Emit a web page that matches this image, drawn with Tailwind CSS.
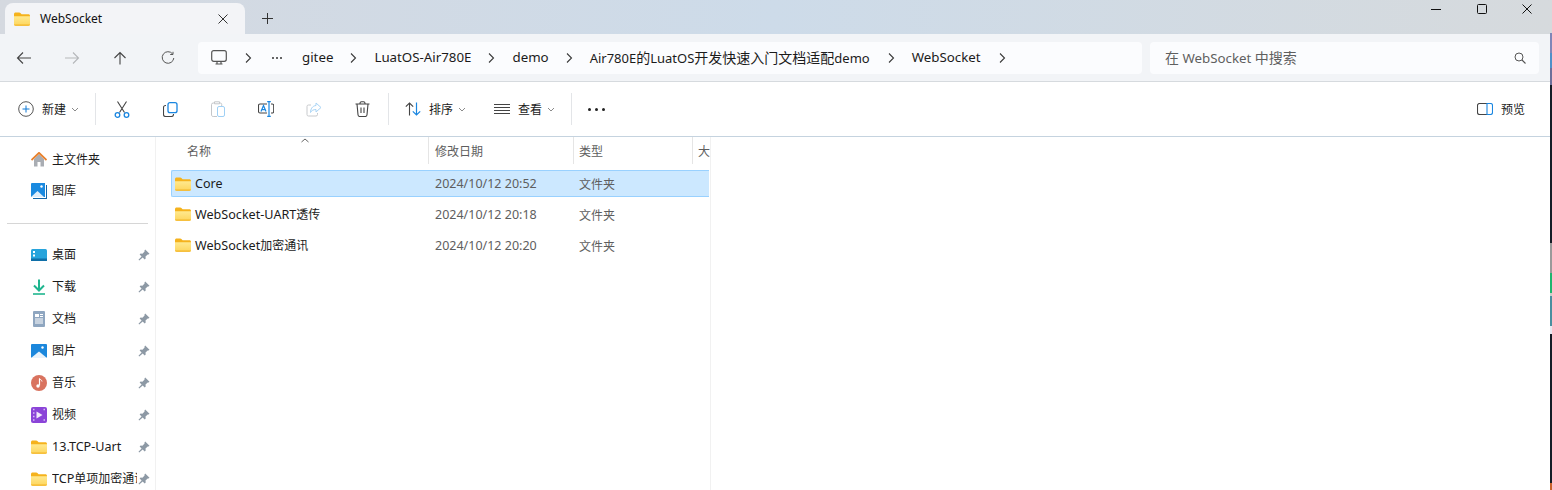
<!DOCTYPE html>
<html lang="zh-CN">
<head>
  <meta charset="UTF-8">
  <title>WebSocket</title>
  <script src="https://cdn.jsdelivr.net/npm/@tailwindcss/browser@4"></script>
</head>
<body class="bg-white">
<svg class="absolute w-0 h-0" width="0" height="0">
  <defs>
    <linearGradient id="fold" x1="0" y1="0" x2="0" y2="1"><stop offset="0" stop-color="#ffe98f"/><stop offset="1" stop-color="#fdd55c"/></linearGradient>
    <symbol id="folder" viewBox="0 0 16 14">
      <path d="M0 2.200C0 1.200.7.500 1.600.500h3.600c.5 0 .9.200 1.200.5L7.600 2.200h6.800c.9 0 1.600.7 1.600 1.600V6H0z" fill="#f5b21c"/>
      <path d="M0 4.200h16v8c0 .9-.7 1.600-1.600 1.600H1.600C.7 13.800 0 13.100 0 12.200z" fill="url(#fold)"/>
      <path d="M0 12.600h16c0 .7-.7 1.200-1.600 1.200H1.600C.7 13.800 0 13.300 0 12.600z" fill="#f3b529"/>
    </symbol>
    <symbol id="pin" viewBox="0 0 12 12">
      <path d="M7.200 .5l4.300 4.300-1 .8-.8-.2-2.200 2.200.2 1.800-1 1-2-2L1.200 11.500.5 10.800l3.100-3.200-2-2 1-1 1.800.2 2.200-2.200-.2-.8z" fill="#8d99a5"/>
    </symbol>
    <symbol id="chev" viewBox="0 0 8 12">
      <path d="M2 1.500L6.500 6 2 10.500" fill="none" stroke="#3a3a3a" stroke-width="1.100"/>
    </symbol>
    <symbol id="down" viewBox="0 0 8 5">
      <path d="M1 1l3 3 3-3" fill="none" stroke="#8a8a8a" stroke-width="1"/>
    </symbol>
  </defs>
</svg>

<div class="w-[1552px] h-[490px] overflow-hidden flex text-[#1b1b1b] text-[12px]" style="font-family:'Noto Sans','Noto Sans CJK SC',sans-serif">
  <div class="w-[1550px] h-[490px] flex flex-col shrink-0">

    <!-- title bar -->
    <div class="h-[34px] flex shrink-0 pl-[5px] bg-gradient-to-r from-[#d5d9e0] via-[#cddbe9] to-[#d6dadd]">
      <div class="w-[240px] h-[31px] mt-[3px] bg-[#f3f4f7] rounded-t-[8px] flex items-center pl-[9px] pr-[17px]">
        <svg class="w-[16px] h-[14px]"><use href="#folder"/></svg>
        <span class="ml-[10px] text-[12px] text-[#111]">WebSocket</span>
        <svg class="ml-auto" width="10" height="10" viewBox="0 0 10 10"><path d="M.5.500l9 9M9.500.500l-9 9" stroke="#333" stroke-width="1"/></svg>
      </div>
      <div class="ml-[17px] mt-[3px] h-[31px] flex items-center">
        <svg width="11" height="11" viewBox="0 0 11 11"><path d="M5.500 0v11M0 5.500h11" stroke="#333" stroke-width="1"/></svg>
      </div>
      <div class="ml-auto h-[14px] mt-[2px] flex items-center pr-[18px]">
        <svg width="10" height="10" viewBox="0 0 10 10"><path d="M0 5.500h10" stroke="#111" stroke-width="1"/></svg>
        <svg class="ml-[36px]" width="10" height="10" viewBox="0 0 10 10"><rect x=".5" y=".5" width="9" height="9" rx="1" fill="none" stroke="#111" stroke-width="1"/></svg>
        <svg class="ml-[35px]" width="10" height="10" viewBox="0 0 10 10"><path d="M.5.500l9 9M9.500.500l-9 9" stroke="#111" stroke-width="1"/></svg>
      </div>
    </div>

    <!-- address row -->
    <div class="h-[48px] shrink-0 flex items-center bg-[#f2f4f7] border-b border-[#d6dade] pr-[11px]">
      <div class="w-[198px] pl-[16px] flex items-center shrink-0">
        <svg width="16" height="14" viewBox="0 0 16 14"><path d="M15 7H2M7 1.500L1.500 7 7 12.500" fill="none" stroke="#444" stroke-width="1.100"/></svg>
        <svg class="ml-[32px]" width="16" height="14" viewBox="0 0 16 14"><path d="M1 7h13M9 1.500L14.500 7 9 12.500" fill="none" stroke="#b5b7ba" stroke-width="1.100"/></svg>
        <svg class="ml-[32px]" width="16" height="14" viewBox="0 0 14 14"><path d="M7 13.500V1.500M1.500 7L7 1.500 12.500 7" fill="none" stroke="#444" stroke-width="1.100"/></svg>
        <svg class="ml-[33px]" width="14" height="14" viewBox="0 0 14 14"><path d="M11.500 2.800A5.800 5.800 0 1 0 12.800 7M12 .8v2.700H9.200" fill="none" stroke="#555" stroke-width="1"/></svg>
      </div>
      <div class="w-[944px] h-[32px] rounded-[4px] bg-[#fbfcfe] flex items-center text-[13.3px] shrink-0">
        <svg class="ml-[13px]" width="16" height="15" viewBox="0 0 16 15"><rect x=".7" y=".7" width="14.600" height="10.600" rx="2" fill="none" stroke="#555" stroke-width="1.200"/><path d="M6 11.500v2M10 11.500v2M4.500 14h7" stroke="#555" stroke-width="1.200"/></svg>
        <svg class="ml-[17px] w-[8px] h-[12px]"><use href="#chev"/></svg>
        <span class="ml-[20px] w-[14px] flex gap-[2px]"><i class="w-[2px] h-[2px] bg-[#333] rounded-full"></i><i class="w-[2px] h-[2px] bg-[#333] rounded-full"></i><i class="w-[2px] h-[2px] bg-[#333] rounded-full"></i></span>
        <span class="ml-[16px]">gitee</span>
        <svg class="ml-[16px] w-[8px] h-[12px]"><use href="#chev"/></svg>
        <span class="ml-[17px]">LuatOS-Air780E</span>
        <svg class="ml-[16px] w-[8px] h-[12px]"><use href="#chev"/></svg>
        <span class="ml-[17px]">demo</span>
        <svg class="ml-[16px] w-[8px] h-[12px]"><use href="#chev"/></svg>
        <span class="ml-[17px] text-[13px]">Air780E<span class="text-[14px]">的</span>LuatOS<span class="text-[14px]">开发快速入门文档适配</span>demo</span>
        <svg class="ml-[17px] w-[8px] h-[12px]"><use href="#chev"/></svg>
        <span class="ml-[17px]">WebSocket</span>
        <svg class="ml-[17px] w-[8px] h-[12px]"><use href="#chev"/></svg>
      </div>
      <div class="ml-[8px] flex-1 h-[32px] rounded-[4px] bg-[#fbfcfe] flex items-center pl-[15px] pr-[13px] text-[13.3px] text-[#5f5f5f]">
        <span><span class="text-[14px]">在</span> WebSocket <span class="text-[14px]">中搜索</span></span>
        <svg class="ml-auto" width="12" height="12" viewBox="0 0 12 12"><circle cx="5" cy="5" r="4" fill="none" stroke="#555" stroke-width="1"/><path d="M8 8l3.500 3.500" stroke="#555" stroke-width="1.100"/></svg>
      </div>
    </div>

    <!-- toolbar -->
    <div class="h-[55px] shrink-0 flex items-center border-b border-[#c5d3df]">
      <div class="flex items-center pl-[18px] w-[95px] shrink-0">
        <svg width="16" height="16" viewBox="0 0 16 16"><circle cx="8" cy="8" r="7.300" fill="none" stroke="#555" stroke-width="1"/><path d="M8 4.500v7M4.500 8h7" stroke="#0f78d4" stroke-width="1"/></svg>
        <span class="ml-[8px] mt-[2px]">新建</span>
        <svg class="ml-[5px] w-[8px] h-[5px]"><use href="#down"/></svg>
      </div>
      <div class="w-px h-[32px] bg-[#e3e5e8]"></div>
      <div class="flex items-center shrink-0">
        <div class="w-[48px] ml-[2px] flex justify-center"><svg width="16" height="17" viewBox="0 0 16 17"><path d="M3.500.5L10.500 11.500M12.500.5L5.500 11.500" stroke="#444" stroke-width="1.100" fill="none"/><circle cx="3.500" cy="14" r="2.300" fill="none" stroke="#1a86e0" stroke-width="1.300"/><circle cx="12.500" cy="14" r="2.300" fill="none" stroke="#1a86e0" stroke-width="1.300"/></svg></div>
        <div class="w-[48px] flex justify-center"><svg width="15" height="15" viewBox="0 0 15 15"><path d="M3 3.500H2.500A2 2 0 0 0 .5 5.500v7a2 2 0 0 0 2 2h6a2 2 0 0 0 2-2V12" fill="none" stroke="#444" stroke-width="1.100"/><rect x="5" y=".7" width="9" height="10" rx="2" fill="#fff" stroke="#1a86e0" stroke-width="1.300"/></svg></div>
        <div class="w-[48px] flex justify-center"><svg width="14" height="16" viewBox="0 0 14 16"><path d="M3.500 2H2.200A1.700 1.700 0 0 0 .5 3.700v10.600A1.700 1.700 0 0 0 2.200 15.500H6M3.500 .8h5v2h-5zM8.500 2h.8c.8 0 1.400.6 1.400 1.400V5" fill="none" stroke="#c4c6c9" stroke-width="1"/><rect x="6.500" y="5.500" width="7" height="10" rx="1.500" fill="#fff" stroke="#9fd0f5" stroke-width="1"/></svg></div>
        <div class="w-[48px] flex justify-center"><svg width="16" height="16" viewBox="0 0 16 16"><path d="M9 3H2A1.500 1.500 0 0 0 .5 4.500v6A1.500 1.500 0 0 0 2 12h7M13 3h1.200A1.500 1.500 0 0 1 15.700 4.500v6a1.500 1.500 0 0 1-1.500 1.500H13" fill="none" stroke="#444" stroke-width="1.100"/><path d="M3 10.500L5.500 4.500 8 10.500M3.800 8.700h3.400M11 1v14M9.200.7h3.600M9.200 15.300h3.600" fill="none" stroke="#1a86e0" stroke-width="1.200"/></svg></div>
        <div class="w-[48px] flex justify-center"><svg width="16" height="15" viewBox="0 0 16 15"><path d="M5 3H2.500A1.500 1.500 0 0 0 1 4.500v8A1.500 1.500 0 0 0 2.500 14h7.500a1.500 1.500 0 0 0 1.500-1.500V11" fill="none" stroke="#c8cacd" stroke-width="1"/><path d="M10 1l5 4.500L10 10V7.500C7.500 7.500 5.500 8.500 4.500 10.500 4.500 7 6.500 3.800 10 3.500z" fill="#fff" stroke="#a8d4f6" stroke-width="1"/></svg></div>
        <div class="w-[48px] flex justify-center"><svg width="15" height="16" viewBox="0 0 15 16"><path d="M.5 3h14M5 3V2.200C5 1.300 5.700.7 6.500.7h2c.8 0 1.500.6 1.500 1.500V3M2 3l1 10.800c.1 1 .8 1.700 1.800 1.700h5.400c1 0 1.700-.7 1.800-1.700L13 3M6 6.500v5.500M9 6.500v5.500" fill="none" stroke="#444" stroke-width="1.100"/></svg></div>
      </div>
      <div class="ml-[2px] w-px h-[32px] bg-[#e3e5e8]"></div>
      <div class="flex items-center ml-[16px] shrink-0">
        <svg width="16" height="14" viewBox="0 0 16 14"><path d="M4.500 13.500V1M.8 4.700L4.500 1l3.700 3.700" fill="none" stroke="#444" stroke-width="1.100"/><path d="M11.500.5V13M7.800 9.300L11.500 13l3.700-3.700" fill="none" stroke="#1a86e0" stroke-width="1.200"/></svg>
        <span class="ml-[8px] mt-[2px]">排序</span>
        <svg class="ml-[5px] w-[8px] h-[5px]"><use href="#down"/></svg>
        <svg class="ml-[28px]" width="16" height="10" viewBox="0 0 16 10"><path d="M0 .5h16M0 3.500h16M0 6.500h16M0 9.500h16" stroke="#444" stroke-width="1"/></svg>
        <span class="ml-[8px] mt-[2px]">查看</span>
        <svg class="ml-[5px] w-[8px] h-[5px]"><use href="#down"/></svg>
      </div>
      <div class="ml-[16px] w-px h-[32px] bg-[#e3e5e8]"></div>
      <div class="ml-[16px] flex gap-[4px]"><i class="w-[3px] h-[3px] bg-[#222] rounded-full"></i><i class="w-[3px] h-[3px] bg-[#222] rounded-full"></i><i class="w-[3px] h-[3px] bg-[#222] rounded-full"></i></div>
      <div class="ml-auto flex items-center pr-[25px]">
        <svg width="16" height="12" viewBox="0 0 16 12"><path d="M10 .5H2.500a2 2 0 0 0-2 2v7a2 2 0 0 0 2 2H10" fill="none" stroke="#444" stroke-width="1.100"/><path d="M10 .5h3.500a2 2 0 0 1 2 2v7a2 2 0 0 1-2 2H10z" fill="none" stroke="#1a86e0" stroke-width="1.100"/></svg>
        <span class="ml-[8px] mt-[2px]">预览</span>
      </div>
    </div>

    <!-- body -->
    <div class="flex-1 flex min-h-0">
      <!-- nav pane -->
      <div class="w-[156px] shrink-0 border-r border-[#f1f1f1] pt-[7px]">
        <div class="h-[31px] flex items-center pl-[31px]">
          <svg width="16" height="15" viewBox="0 0 16 15"><path d="M3 7v7.500h3.500V10h3v4.500H13V7L8 2z" fill="#a9adb3"/><path d="M.5 8L8 .8 15.500 8" fill="none" stroke="#e8802c" stroke-width="1.800"/></svg>
          <span class="ml-[5px]">主文件夹</span>
        </div>
        <div class="h-[31px] flex items-center pl-[31px]">
          <svg width="16" height="16" viewBox="0 0 16 16"><path d="M0 1a1 1 0 0 1 1-1h13v14H0z" fill="#1a8ae0"/><path d="M15 2h1v14H2v-1h13z" fill="#1467a8"/><path d="M0 14l6.500-6 6.500 6z" fill="#dfeefa"/><circle cx="10.500" cy="3.500" r="1.200" fill="#fff"/></svg>
          <span class="ml-[5px]">图库</span>
        </div>
        <div class="h-px bg-[#d6d6d6] mx-[7px] mt-[17px] mb-[15px]"></div>
        <div class="flex flex-col">
          <div class="h-[32px] flex items-center pl-[31px] pr-[5px]">
            <svg width="16" height="12" viewBox="0 0 16 12"><rect width="16" height="12" rx="1.500" fill="#27a4dc"/><rect y="9.500" width="16" height="2.500" fill="#0f6fa8"/><rect x="2" y="2" width="2" height="2" fill="#fff"/><rect x="2" y="5.500" width="2" height="2" fill="#fff"/></svg>
            <span class="ml-[5px]">桌面</span>
            <svg class="ml-auto w-[12px] h-[12px]"><use href="#pin"/></svg>
          </div>
          <div class="h-[32px] flex items-center pl-[31px] pr-[5px]">
            <svg width="16" height="16" viewBox="0 0 16 16"><path d="M8 .5v10.500M3 6.500l5 5 5-5" fill="none" stroke="#1fb58f" stroke-width="2"/><path d="M2 15h12" stroke="#1fb58f" stroke-width="1.600"/></svg>
            <span class="ml-[5px]">下载</span>
            <svg class="ml-auto w-[12px] h-[12px]"><use href="#pin"/></svg>
          </div>
          <div class="h-[32px] flex items-center pl-[31px] pr-[5px]">
            <svg width="16" height="16" viewBox="0 0 16 16"><rect x="2" y="0" width="12" height="16" rx="1" fill="#8fa6c0"/><rect x="4" y="3" width="4" height="3" fill="#fff"/><path d="M9 3.500h3M9 5.500h3M4 8h8M4 10h8M4 12h8" stroke="#fff" stroke-width="1"/></svg>
            <span class="ml-[5px]">文档</span>
            <svg class="ml-auto w-[12px] h-[12px]"><use href="#pin"/></svg>
          </div>
          <div class="h-[32px] flex items-center pl-[31px] pr-[5px]">
            <svg width="16" height="14" viewBox="0 0 16 14"><rect width="16" height="14" rx="1" fill="#1b87dc"/><path d="M0 14l8-6.500 8 6.500z" fill="#e8f2fb"/><circle cx="11.500" cy="3.500" r="1.200" fill="#fff"/></svg>
            <span class="ml-[5px]">图片</span>
            <svg class="ml-auto w-[12px] h-[12px]"><use href="#pin"/></svg>
          </div>
          <div class="h-[32px] flex items-center pl-[31px] pr-[5px]">
            <svg width="16" height="16" viewBox="0 0 16 16"><circle cx="8" cy="8" r="8" fill="#d9735f"/><path d="M8.500 3.500v7" stroke="#fff" stroke-width="1.200"/><path d="M8.500 3.500c1 1.500 2.500 1.500 2.500 3" fill="none" stroke="#fff"/><circle cx="7" cy="11" r="1.700" fill="#fff"/></svg>
            <span class="ml-[5px]">音乐</span>
            <svg class="ml-auto w-[12px] h-[12px]"><use href="#pin"/></svg>
          </div>
          <div class="h-[32px] flex items-center pl-[31px] pr-[5px]">
            <svg width="16" height="16" viewBox="0 0 16 16"><rect width="16" height="16" rx="2" fill="#8b44d8"/><path d="M5.500 4.500l6 3.500-6 3.500z" fill="#f1e8fb"/><path d="M2 2.500h1.500M2 6h1.500M2 9.500h1.500M2 13h1.500M12.500 2.500H14M12.500 13H14" stroke="#d8bdf5" stroke-width="1.400"/></svg>
            <span class="ml-[5px]">视频</span>
            <svg class="ml-auto w-[12px] h-[12px]"><use href="#pin"/></svg>
          </div>
          <div class="h-[32px] flex items-center pl-[31px] pr-[5px]">
            <svg class="w-[16px] h-[14px] shrink-0"><use href="#folder"/></svg>
            <span class="ml-[5px] text-[12.6px]">13.TCP-Uart</span>
            <svg class="ml-auto w-[12px] h-[12px]"><use href="#pin"/></svg>
          </div>
          <div class="h-[32px] flex items-center pl-[31px] pr-[5px]">
            <svg class="w-[16px] h-[14px] shrink-0"><use href="#folder"/></svg>
            <span class="ml-[5px] w-[85px] overflow-hidden whitespace-nowrap shrink-0 text-[12.6px]">TCP<span class="text-[12px]">单项加密通讯</span></span>
            <svg class="ml-auto w-[12px] h-[12px] shrink-0"><use href="#pin"/></svg>
          </div>
        </div>
      </div>

      <!-- file list -->
      <div class="w-[555px] shrink-0 border-r border-[#f1f1f1] pl-[15px] text-[#5e5e5e] relative">
        <svg class="absolute left-[145px] top-[1px]" width="8" height="5" viewBox="0 0 8 5"><path d="M.5 4L4 1l3.500 3" fill="none" stroke="#666" stroke-width="1"/></svg>
        <div class="h-[27px] flex">
          <div class="w-[258px] pl-[16px] pt-[6px] border-r border-[#e5e5e5]">名称</div>
          <div class="w-[145px] pl-[6px] pt-[6px] border-r border-[#e5e5e5]">修改日期</div>
          <div class="w-[119px] pl-[5px] pt-[6px] border-r border-[#e5e5e5]">类型</div>
          <div class="pl-[5px] pt-[6px]">大</div>
        </div>
        <div class="mt-[6px] h-[27px] w-[538px] flex items-center bg-[#cce8ff] border-y border-[#99d1ff] border-l rounded-l-[2px]">
          <div class="w-[257px] pl-[3px] flex items-center text-[#1b1b1b]"><svg class="w-[16px] h-[14px] shrink-0"><use href="#folder"/></svg><span class="ml-[4px] mt-[2px] text-[12.5px]">Core</span></div>
          <div class="w-[145px] pl-[6px] mt-[2px] text-[12.5px]">2024/10/12 20:52</div>
          <div class="pl-[5px] mt-[2px]">文件夹</div>
        </div>
        <div class="mt-[4px] h-[27px] w-[538px] flex items-center">
          <div class="w-[258px] pl-[4px] flex items-center text-[#1b1b1b]"><svg class="w-[16px] h-[14px] shrink-0"><use href="#folder"/></svg><span class="ml-[4px] mt-[2px] text-[12.6px]">WebSocket-UART<span class="text-[12px]">透传</span></span></div>
          <div class="w-[145px] pl-[6px] mt-[2px] text-[12.5px]">2024/10/12 20:18</div>
          <div class="pl-[5px] mt-[2px]">文件夹</div>
        </div>
        <div class="mt-[4px] h-[27px] w-[538px] flex items-center">
          <div class="w-[258px] pl-[4px] flex items-center text-[#1b1b1b]"><svg class="w-[16px] h-[14px] shrink-0"><use href="#folder"/></svg><span class="ml-[4px] mt-[2px] text-[12.6px]">WebSocket<span class="text-[12px]">加密通讯</span></span></div>
          <div class="w-[145px] pl-[6px] mt-[2px] text-[12.5px]">2024/10/12 20:20</div>
          <div class="pl-[5px] mt-[2px]">文件夹</div>
        </div>
      </div>
    </div>
  </div>
  <!-- sliver of the desktop behind the window -->
  <div class="w-[2px] h-[490px] shrink-0 flex flex-col bg-[#141c26]">
    <div class="h-[33px] bg-[#d6dadd]"></div>
    <div class="h-[20px] bg-[#7f86b8]"></div>
    <div class="h-[15px] bg-[#4f90c8]"></div>
    <div class="h-[17px] bg-[#6d6f9a]"></div>
    <div class="h-[158px]"></div>
    <div class="h-[30px] bg-[#9a9a9a]"></div>
    <div class="h-[20px] bg-[#1fb56f]"></div>
    <div class="h-[3px] bg-[#c8d0c8]"></div>
    <div class="h-[30px] bg-[#4a8f9f]"></div>
    <div class="h-[8px] bg-[#e8e8f0]"></div>
    <div class="h-[149px]"></div>
    <div class="h-[7px] bg-[#c8602a]"></div>
  </div>
</div>
</body>
</html>
